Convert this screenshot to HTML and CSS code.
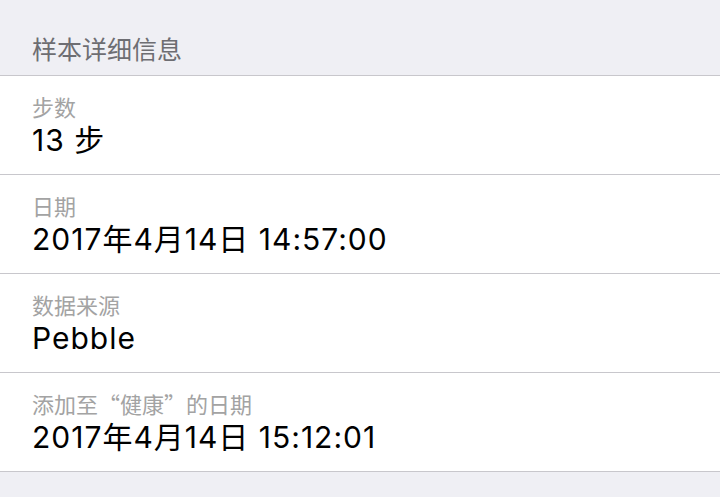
FILE: index.html
```html
<!DOCTYPE html>
<html lang="zh-CN">
<head>
    <meta charset="UTF-8">
    <meta name="viewport" content="width=device-width, initial-scale=1.0">
    <title>样本详细信息</title>
    <link rel="stylesheet" href="styles.css">
</head>
<body>
    <div class="section-header">样本详细信息</div>

    <ul class="detail-list">
        <li class="detail-row">
            <div class="detail-label">步数</div>
            <div class="detail-value">13 步</div>
        </li>
        <li class="detail-row">
            <div class="detail-label">日期</div>
            <div class="detail-value">2017年4月14日 14:57:00</div>
        </li>
        <li class="detail-row">
            <div class="detail-label">数据来源</div>
            <div class="detail-value">Pebble</div>
        </li>
        <li class="detail-row">
            <div class="detail-label">添加至“健康”的日期</div>
            <div class="detail-value">2017年4月14日 15:12:01</div>
        </li>
    </ul>
</body>
</html>
```

FILE: styles.css
```css
body {
    margin: 0;
    background-color: #efeff4;
    font-family: Inter, "Noto Sans CJK SC", sans-serif;
}
.section-header {
    height: 76px;
    box-sizing: border-box;
    padding: 32px 32px 0;
    font-family: "Noto Sans CJK SC", sans-serif;
    font-size: 25px;
    line-height: 32px;
    color: #6d6d72;
    border-bottom: 1px solid #c8c7cc;
}
.detail-list {
    list-style: none;
    margin: 0;
    padding: 0;
    background-color: #fff;
}
.detail-row {
    height: 99px;
    box-sizing: border-box;
    padding: 16px 32px 0;
    border-bottom: 1px solid #c8c7cc;
}
.detail-label {
    font-family: "Noto Sans CJK SC", sans-serif;
    font-size: 22px;
    line-height: 28px;
    color: #a3a3a3;
}
.detail-value {
    font-size: 30px;
    line-height: 40px;
    letter-spacing: 1px;
    color: #000;
}
```
